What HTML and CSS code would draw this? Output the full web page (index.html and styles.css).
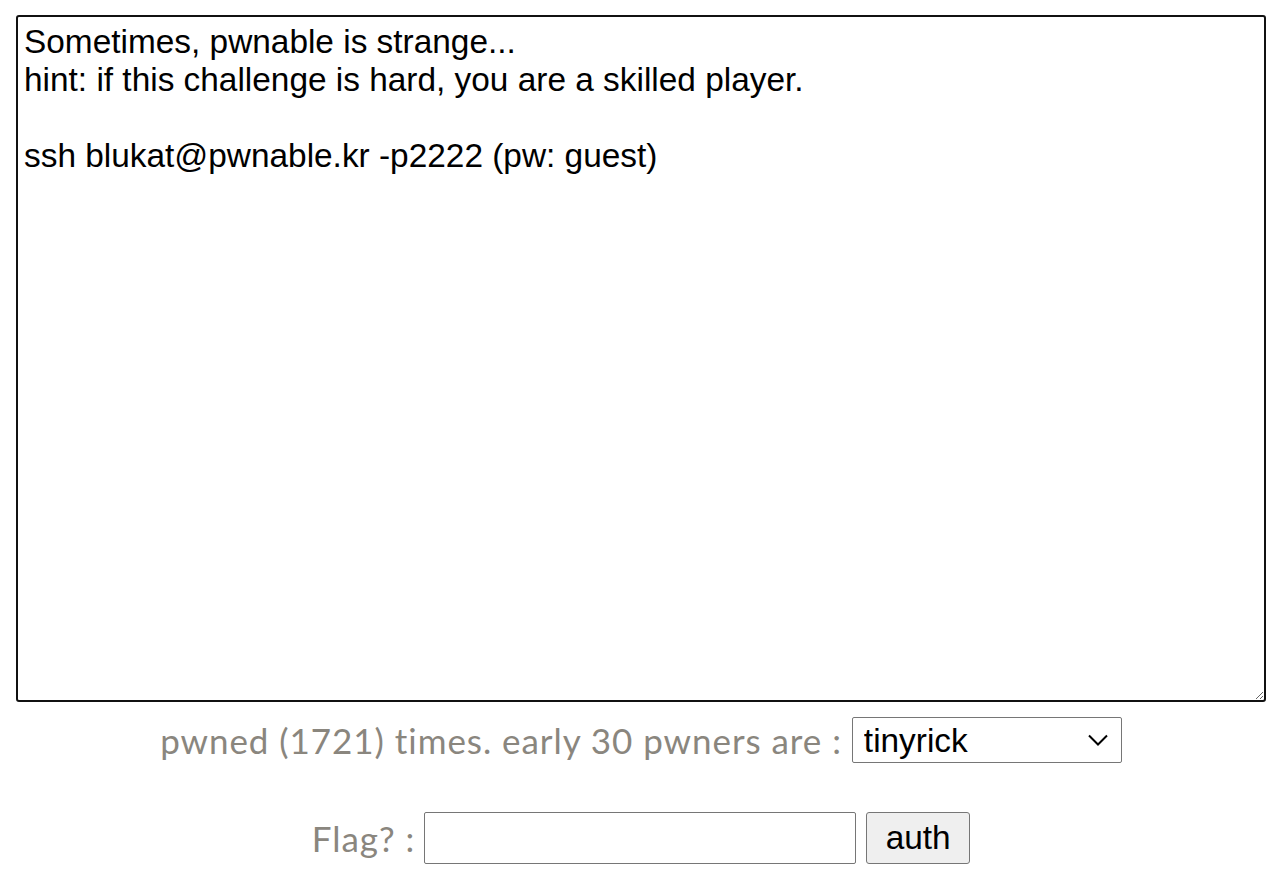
FILE: index.html
```html
<!DOCTYPE html>
<html>
<head>
<meta charset="utf-8">
<title>blukat</title>
<link rel="stylesheet" href="styles.css">
</head>
<body>
<textarea class="desc">Sometimes, pwnable is strange...
hint: if this challenge is hard, you are a skilled player.

ssh blukat@pwnable.kr -p2222 (pw: guest)</textarea>
<div class="row row-pwned">
  <span class="label">pwned (1721) times. early 30 pwners are :</span>
  <span class="select-wrap">
    <select class="pwners">
      <option>tinyrick</option>
    </select>
    <svg class="chev" width="20" height="12" viewBox="0 0 20 12"><path d="M1 1.5 L10 10.5 L19 1.5" fill="none" stroke="#000" stroke-width="2"/></svg>
  </span>
</div>
<div class="row row-flag">
  <span class="label">Flag? :</span>
  <input class="flag" type="text">
  <button class="auth">auth</button>
</div>
</body>
</html>
```

FILE: styles.css
```css
html, body {
  margin: 0;
  background: #fff;
}
body {
  padding: 15px 12px 0 16px;
}
.desc {
  display: block;
  box-sizing: border-box;
  width: 1250px;
  height: 687px;
  margin: 0;
  border: 2px solid #111;
  border-radius: 3px;
  padding: 6px 6px;
  font-family: "Liberation Sans", Arial, sans-serif;
  font-size: 33.4px;
  line-height: 38px;
  color: #000;
  background: #fff;
  outline: none;
}
.row {
  display: flex;
  justify-content: center;
  align-items: center;
  gap: 10px;
}
.row-pwned {
  margin-top: 15px;
  height: 46px;
}
.row-flag {
  margin-top: 49px;
  height: 52px;
  gap: 9px;
}
.row-flag .auth {
  margin-left: 1px;
}
.label {
  font-family: Lato, "Open Sans", sans-serif;
  font-size: 35px;
  letter-spacing: 0.95px;
  color: #8a867e;
}
.select-wrap {
  position: relative;
  display: block;
}
.pwners {
  -webkit-appearance: none;
  appearance: none;
  box-sizing: border-box;
  width: 270px;
  height: 46px;
  margin: 0;
  border: 1px solid #767676;
  border-radius: 2px;
  padding: 0 40px 0 11px;
  background: #fff;
  font-family: "Liberation Sans", Arial, sans-serif;
  font-size: 33.4px;
  color: #000;
  display: block;
}
.chev {
  position: absolute;
  right: 14px;
  top: 17px;
  pointer-events: none;
}
.flag {
  box-sizing: border-box;
  width: 432px;
  height: 52px;
  margin: 0;
  border: 1px solid #767676;
  border-radius: 2px;
  padding: 0 6px;
  font-family: "Liberation Sans", Arial, sans-serif;
  font-size: 33px;
  background: #fff;
}
.auth {
  box-sizing: border-box;
  width: 104px;
  height: 52px;
  margin: 0;
  border: 1px solid #767676;
  border-radius: 3px;
  padding: 0;
  background: #efefef;
  font-family: "Liberation Sans", Arial, sans-serif;
  font-size: 33.4px;
  color: #000;
}
```
